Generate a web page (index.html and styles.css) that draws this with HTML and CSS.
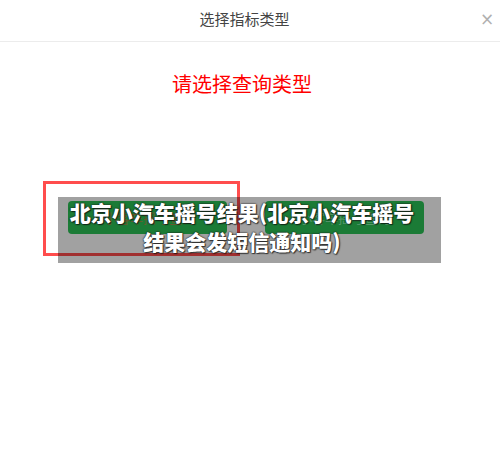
FILE: index.html
```html
<!DOCTYPE html>
<html lang="zh-CN">
<head>
<meta charset="utf-8">
<title>选择指标类型</title>
<link rel="stylesheet" href="styles.css">
</head>
<body>
<div class="header">
  <div class="title">选择指标类型</div>
  <div class="close">×</div>
</div>
<div class="prompt">请选择查询类型</div>
<div class="stage">
  <div class="mark"></div>
  <div class="panel">
    <div class="btn btn-left"><span>小客车摇号查询</span></div>
    <div class="btn btn-right"><span>小客车摇号查询</span></div>
  </div>
  <div class="caption">北京小汽车摇号结果(北京小汽车摇号结果会发短信通知吗)</div>
</div>
</body>
</html>
```
FILE: styles.css
```css
html, body {
  margin: 0;
  padding: 0;
  background: #fff;
  font-family: "Noto Sans CJK SC", "Noto Sans", sans-serif;
}

.header {
  height: 41px;
  border-bottom: 1px solid #ececec;
  display: flex;
  align-items: center;
}

.title {
  flex: 1;
  text-align: center;
  padding-left: 9px;
  font-size: 15px;
  color: #444;
  line-height: 20px;
  margin-top: -4px;
}

.close {
  width: 12px;
  margin-right: 8px;
  font-size: 17px;
  color: #b0b0b0;
  line-height: 16px;
  margin-top: -4px;
  font-family: "DejaVu Sans", sans-serif;
}

.prompt {
  margin-top: 30px;
  text-align: center;
  padding-right: 16px;
  font-size: 20px;
  line-height: 24px;
  color: #ff0000;
}

.stage {
  position: relative;
  margin-top: 101px;
}

.mark {
  position: absolute;
  left: 43px;
  top: -16px;
  width: 191px;
  height: 69px;
  border: 3px solid #ff4d4d;
  z-index: 0;
}

.panel {
  position: relative;
  z-index: 1;
  margin-left: 58px;
  width: 373px;
  height: 62px;
  padding: 4px 0 0 10px;
  background: rgba(0, 0, 0, 0.37);
  display: flex;
  gap: 38px;
  align-items: flex-start;
}

.btn {
  width: 159px;
  height: 33px;
  border-radius: 4px;
  background: #1b7b36;
  display: flex;
  align-items: center;
  justify-content: center;
  font-size: 13px;
}

.btn-left span {
  color: rgba(200, 50, 40, 0.45);
  margin-left: 4px;
}

.btn-right span {
  color: rgba(200, 210, 210, 0.35);
}

.caption {
  position: absolute;
  z-index: 2;
  left: 66px;
  top: 1px;
  width: 352px;
  text-align: center;
  font-size: 21px;
  font-weight: 900;
  line-height: 29px;
  color: #fff;
  text-shadow: 0 0 2px #1a1a1a, 0 0 1px #1a1a1a, 1px 1px 1px rgba(0,0,0,0.6);
}
```
